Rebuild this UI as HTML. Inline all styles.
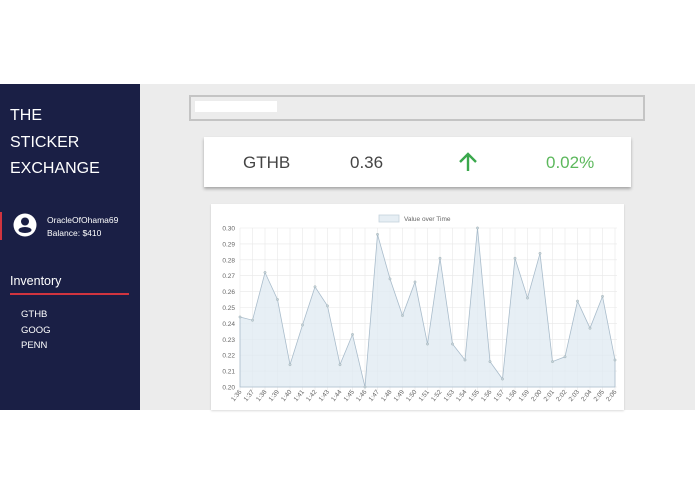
<!DOCTYPE html>
<html><head><meta charset="utf-8"><style>
*{margin:0;padding:0;box-sizing:border-box}
body{width:695px;height:494px;background:#fff;position:relative;overflow:hidden;font-family:"Liberation Sans",sans-serif}
.abs{position:absolute}
</style></head><body>
<div class="abs" style="left:0;top:84px;width:695px;height:326px;background:#ececec"></div>
<div class="abs" style="left:0;top:84px;width:140px;height:326px;background:#1a1f45"></div>
<div class="abs" style="left:10px;top:103px;color:#fff;font-size:16px;line-height:26.5px">THE<br>STICKER<br>EXCHANGE</div>
<div class="abs" style="left:0;top:212px;width:2px;height:28px;background:#d0343f"></div>
<svg class="abs" style="left:13px;top:213px" width="24" height="24" viewBox="0 0 24 24"><circle cx="12" cy="12" r="11.5" fill="#fff"/><circle cx="12" cy="8.5" r="4" fill="#1a1f45"/><ellipse cx="12" cy="17" rx="6.5" ry="3" fill="#1a1f45"/></svg>
<div class="abs" style="left:47px;top:214px;color:#fff;font-size:8.5px;line-height:13px">OracleOfOhama69<br>Balance: $410</div>
<div class="abs" style="left:10px;top:274px;color:#fff;font-size:12.5px">Inventory</div>
<div class="abs" style="left:10px;top:293px;width:119px;height:2px;background:#d0343f"></div>
<div class="abs" style="left:21px;top:307px;color:#fff;font-size:9.5px;line-height:15.5px">GTHB<br>GOOG<br>PENN</div>
<div class="abs" style="left:189px;top:95px;width:456px;height:26px;border:2px solid #c4c4c4;background:#ececec"></div>
<div class="abs" style="left:195px;top:101px;width:82px;height:11px;background:#fff"></div>
<div class="abs" style="left:204px;top:137px;width:427px;height:50px;background:#fff;box-shadow:0 2px 3px rgba(0,0,0,.3)"></div>
<div class="abs" style="left:243px;top:153px;font-size:17px;color:#444">GTHB</div>
<div class="abs" style="left:350px;top:153px;font-size:17px;color:#444">0.36</div>
<svg class="abs" style="left:457px;top:151px" width="22" height="22" viewBox="0 0 22 22"><path d="M11 20V3M3 11L11 3L19 11" stroke="#3aa84c" stroke-width="2.4" fill="none"/></svg>
<div class="abs" style="left:546px;top:153px;font-size:17px;color:#5cb85c">0.02%</div>
<div class="abs" style="left:211px;top:204px;width:413px;height:206px;background:#fff;box-shadow:0 1px 2px rgba(0,0,0,.15)"></div>
<svg class="abs" style="left:0;top:0" width="695" height="410" font-family="Liberation Sans" font-size="6.5" fill="#666">
<rect x="379" y="215" width="20" height="7" fill="#e6eef4" stroke="#c5d3dd" stroke-width=".8"/>
<text x="404" y="221" font-size="6.5">Value over Time</text>
<g stroke="#e8e8e8" stroke-width=".6">
<line x1="240" y1="228" x2="617" y2="228"/><line x1="240" y1="243.9" x2="617" y2="243.9"/><line x1="240" y1="259.8" x2="617" y2="259.8"/><line x1="240" y1="275.7" x2="617" y2="275.7"/><line x1="240" y1="291.6" x2="617" y2="291.6"/><line x1="240" y1="307.5" x2="617" y2="307.5"/><line x1="240" y1="323.4" x2="617" y2="323.4"/><line x1="240" y1="339.3" x2="617" y2="339.3"/><line x1="240" y1="355.2" x2="617" y2="355.2"/><line x1="240" y1="371.1" x2="617" y2="371.1"/><line x1="240" y1="387" x2="617" y2="387"/>
</g>
<g stroke="#e8e8e8" stroke-width=".6" id="vg"></g>
<polygon points="240,387 240,317 252.5,320.2 265,272.5 277.5,299.5 290,364.7 302.5,325 315,286.8 327.5,305.9 340,364.7 352.5,334.5 365,387 377.5,234.4 390,278.9 402.5,315.5 415,282 427.5,344 440,258.2 452.5,344 465,360 477.5,228 490,361.6 502.5,379 515,258.2 527.5,298 540,253.4 552.5,361.6 565,356.8 577.5,301.1 590,328.2 602.5,296.4 615,360 615,387" fill="#dfe9f1" fill-opacity=".75" stroke="#a9bccb" stroke-width=".8"/>
<g fill="#c5d3dd" stroke="#9aa" stroke-width=".4">
<circle cx="240" cy="317" r="1.2"/><circle cx="252.5" cy="320.2" r="1.2"/><circle cx="265" cy="272.5" r="1.2"/><circle cx="277.5" cy="299.5" r="1.2"/><circle cx="290" cy="364.7" r="1.2"/><circle cx="302.5" cy="325" r="1.2"/><circle cx="315" cy="286.8" r="1.2"/><circle cx="327.5" cy="305.9" r="1.2"/><circle cx="340" cy="364.7" r="1.2"/><circle cx="352.5" cy="334.5" r="1.2"/><circle cx="365" cy="387" r="1.2"/><circle cx="377.5" cy="234.4" r="1.2"/><circle cx="390" cy="278.9" r="1.2"/><circle cx="402.5" cy="315.5" r="1.2"/><circle cx="415" cy="282" r="1.2"/><circle cx="427.5" cy="344" r="1.2"/><circle cx="440" cy="258.2" r="1.2"/><circle cx="452.5" cy="344" r="1.2"/><circle cx="465" cy="360" r="1.2"/><circle cx="477.5" cy="228" r="1.2"/><circle cx="490" cy="361.6" r="1.2"/><circle cx="502.5" cy="379" r="1.2"/><circle cx="515" cy="258.2" r="1.2"/><circle cx="527.5" cy="298" r="1.2"/><circle cx="540" cy="253.4" r="1.2"/><circle cx="552.5" cy="361.6" r="1.2"/><circle cx="565" cy="356.8" r="1.2"/><circle cx="577.5" cy="301.1" r="1.2"/><circle cx="590" cy="328.2" r="1.2"/><circle cx="602.5" cy="296.4" r="1.2"/><circle cx="615" cy="360" r="1.2"/>
</g>
<g text-anchor="end">
<text x="235" y="230.5">0.30</text><text x="235" y="246.4">0.29</text><text x="235" y="262.3">0.28</text><text x="235" y="278.2">0.27</text><text x="235" y="294.1">0.26</text><text x="235" y="310">0.25</text><text x="235" y="325.9">0.24</text><text x="235" y="341.8">0.23</text><text x="235" y="357.7">0.22</text><text x="235" y="373.6">0.21</text><text x="235" y="389.5">0.20</text>
</g>
<g id="xl" text-anchor="end"></g>
</svg>
<script>
var vg=document.getElementById('vg'),xl=document.getElementById('xl'),ns='http://www.w3.org/2000/svg';
var labs=['1:36','1:37','1:38','1:39','1:40','1:41','1:42','1:43','1:44','1:45','1:46','1:47','1:48','1:49','1:50','1:51','1:52','1:53','1:54','1:55','1:56','1:57','1:58','1:59','2:00','2:01','2:02','2:03','2:04','2:05','2:06'];
for(var i=0;i<31;i++){var x=240+12.5*i;var l=document.createElementNS(ns,'line');l.setAttribute('x1',x);l.setAttribute('x2',x);l.setAttribute('y1',228);l.setAttribute('y2',390);vg.appendChild(l);
var t=document.createElementNS(ns,'text');t.setAttribute('transform','translate('+(x+2)+',392) rotate(-50)');t.textContent=labs[i];xl.appendChild(t);}
</script>
</body></html>
